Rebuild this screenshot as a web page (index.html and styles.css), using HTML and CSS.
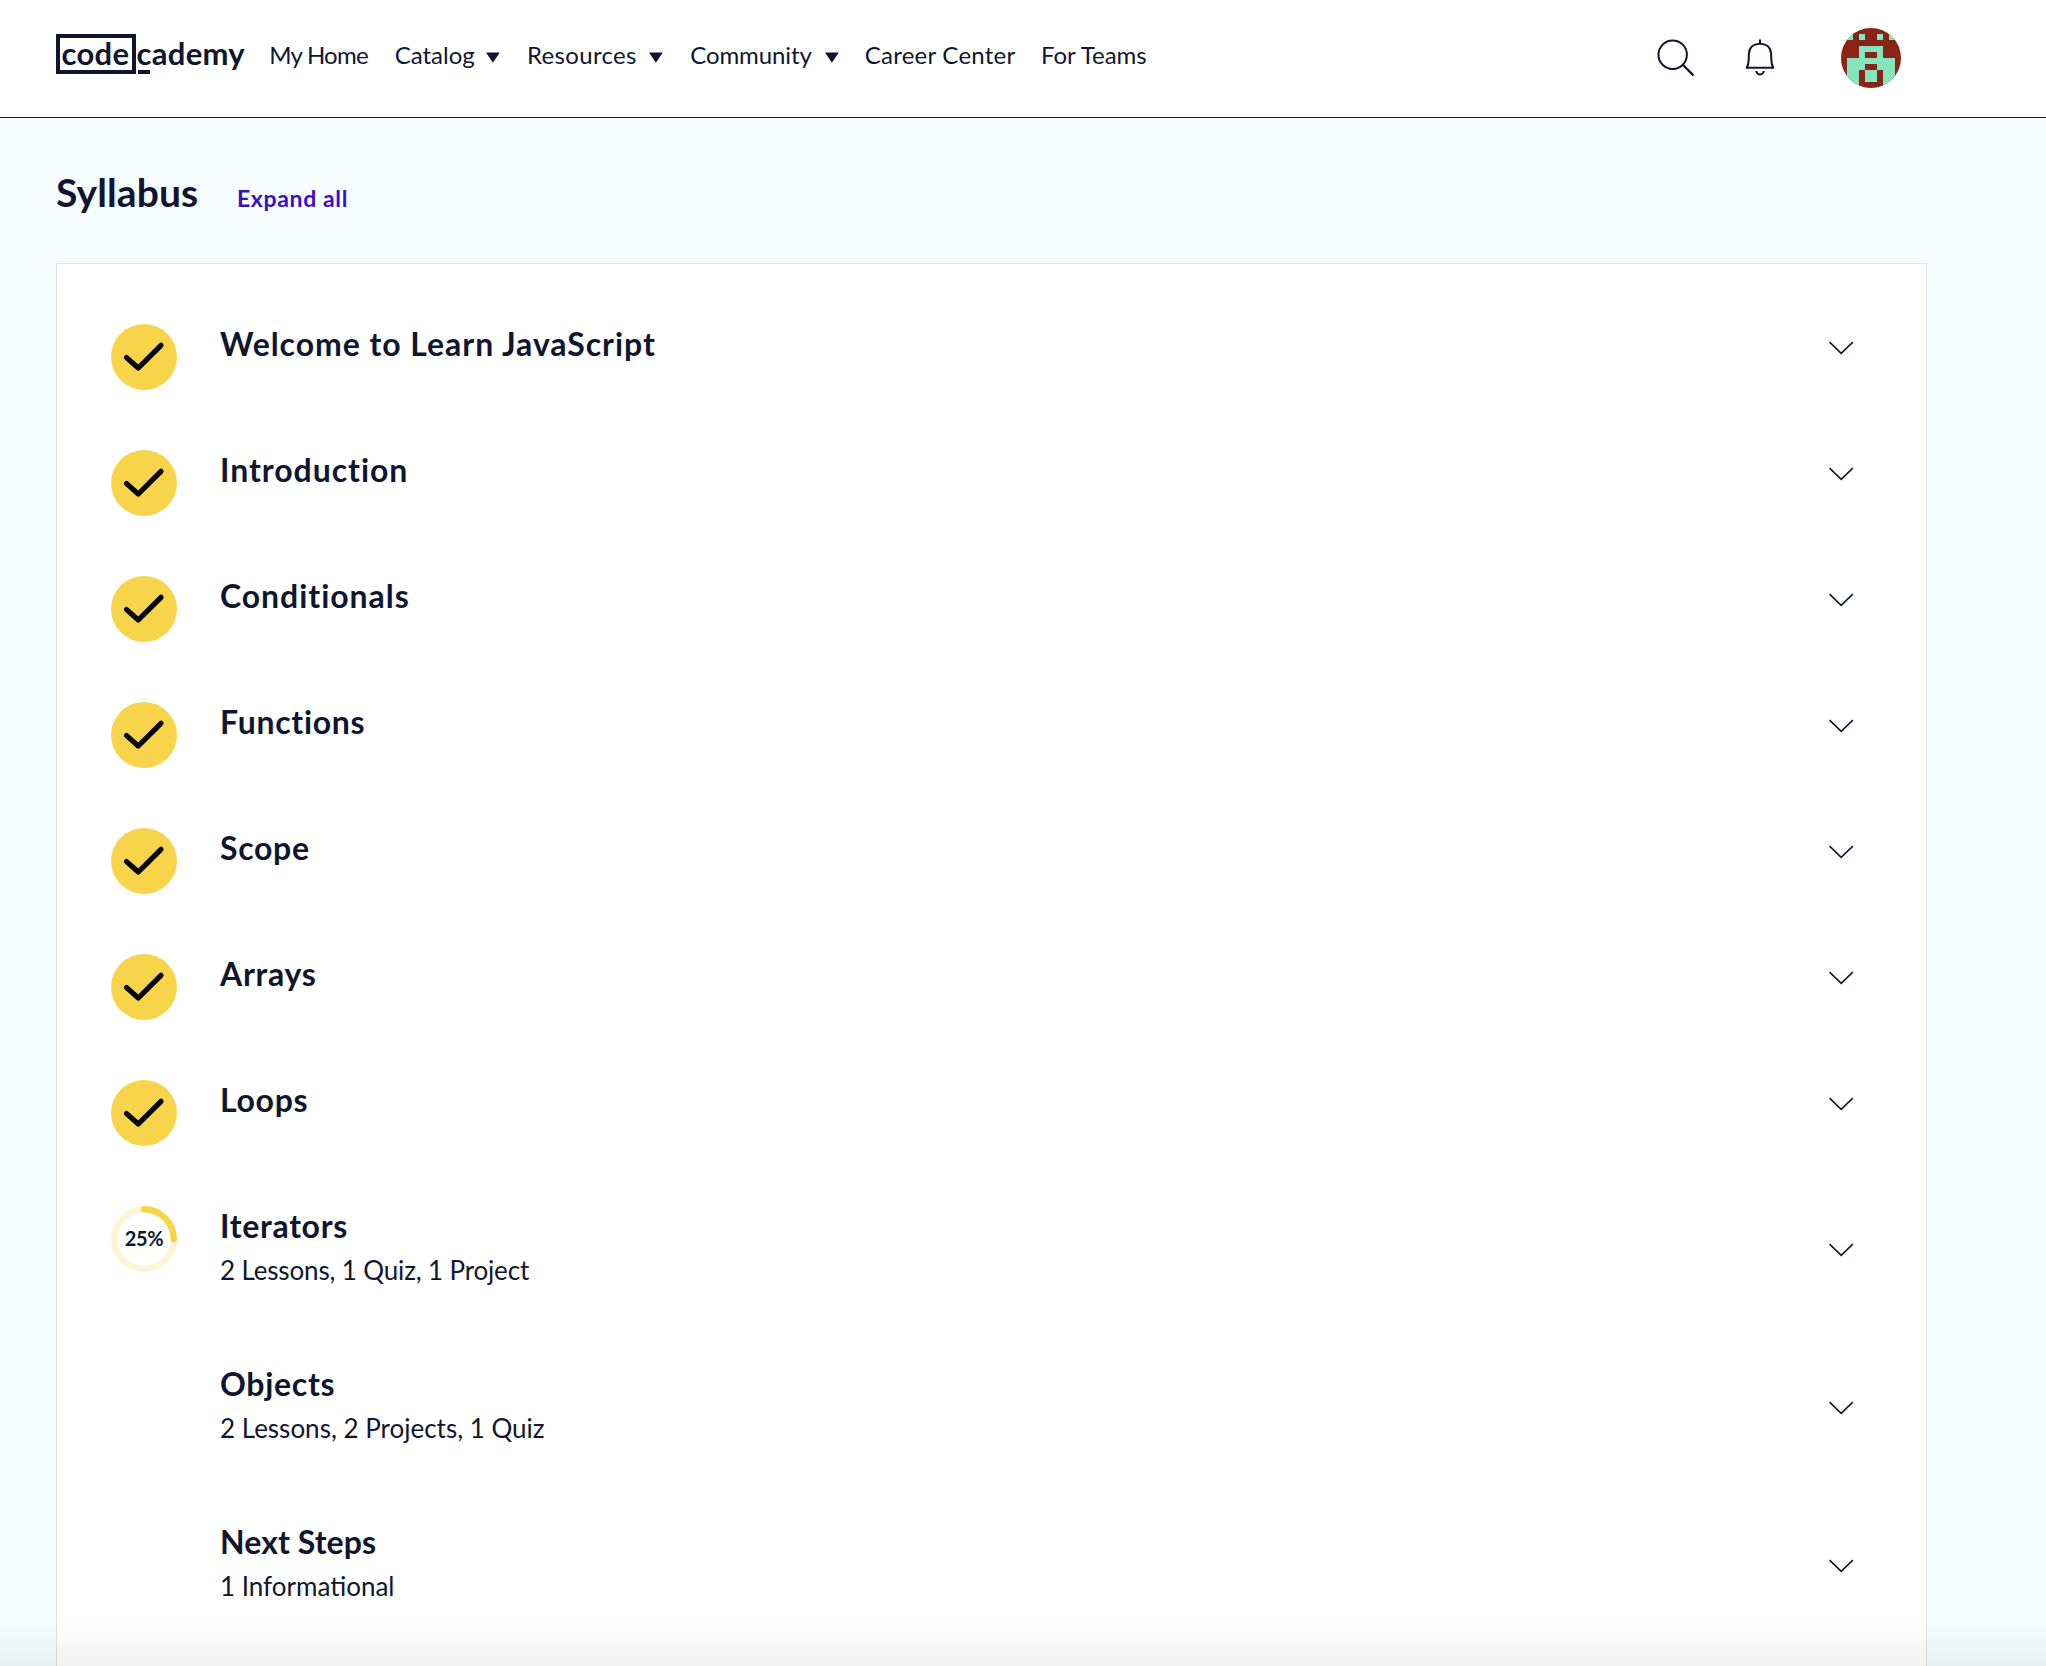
FILE: index.html
```
<!DOCTYPE html>
<html lang="en">
<head>
<meta charset="utf-8">
<title>Syllabus</title>
<link rel="stylesheet" href="styles.css">
</head>
<body>
<svg class="defs" aria-hidden="true">
  <symbol id="check" viewBox="0 0 66 66"><circle cx="33" cy="33" r="33" fill="#f7d449"/><path d="M15.6 33.6 27.3 44 50 21.3" fill="none" stroke="#000" stroke-width="5.2" stroke-linecap="round" stroke-linejoin="round"/></symbol>
  <symbol id="chevron" viewBox="0 0 26 14"><path d="M1.6 1.2 13.2 12.4 24.8 1.2" fill="none" stroke="#10162f" stroke-width="1.6"/></symbol>
  <symbol id="caret" viewBox="0 0 14 11"><path d="M0 .5h13.8L6.9 10.8z" fill="#10162f"/></symbol>
</svg>

<header class="header">
  <a class="logo"><span class="logo-box">code</span><span class="logo-rest">cademy</span></a>
  <nav class="nav">
    <a class="nav-home">My Home</a>
    <a class="menu">Catalog <svg class="caret"><use href="#caret"/></svg></a>
    <a class="menu nav-resources">Resources <svg class="caret"><use href="#caret"/></svg></a>
    <a class="menu nav-community">Community <svg class="caret"><use href="#caret"/></svg></a>
    <a class="nav-career">Career Center</a>
    <a>For Teams</a>
  </nav>
  <div class="tools">
    <svg class="search" viewBox="0 0 38 38" fill="none" stroke="#10162f"><circle cx="15.7" cy="15.7" r="14.2" stroke-width="2"/><path d="M25.5 25.5 36.5 36.5" stroke-width="2.4"/></svg>
    <svg class="bell" viewBox="0 0 30 38" fill="none" stroke="#10162f" stroke-width="2"><path d="M15 .5V5M.8 28.8h28.4M2 28.5C4.5 23 3.5 18 4 14 4.600 8 9 4.700 15 4.700S25.400 8 26 14C26.500 18 25.500 23 28 28.500M11.300 32C11.800 36.600 18.200 36.600 18.700 32"/></svg>
    <svg class="avatar" viewBox="0 0 10 10" shape-rendering="crispEdges"><rect width="10" height="10" fill="#8a2416"/><path fill="#85e5be" d="M1 1h1v1H1zM3 1h1v1H3zM6 1h1v1H6zM8 1h1v1H8zM3 3h4v2h2v5H7V7H6V6H4V7H3v3H1V5h2zM4 7v2h2V7z"/><path fill="#8a2416" d="M4 4h2v1H4z"/></svg>
  </div>
</header>

<main class="main">
  <div class="heading"><h1>Syllabus</h1><a class="expand">Expand all</a></div>
  <ul class="card">
    <li class="item"><svg class="status"><use href="#check"/></svg><div class="text"><h2 class="wide">Welcome to Learn JavaScript</h2></div><svg class="chevron"><use href="#chevron"/></svg></li>
    <li class="item"><svg class="status"><use href="#check"/></svg><div class="text"><h2 class="wide">Introduction</h2></div><svg class="chevron"><use href="#chevron"/></svg></li>
    <li class="item"><svg class="status"><use href="#check"/></svg><div class="text"><h2 class="wide">Conditionals</h2></div><svg class="chevron"><use href="#chevron"/></svg></li>
    <li class="item"><svg class="status"><use href="#check"/></svg><div class="text"><h2>Functions</h2></div><svg class="chevron"><use href="#chevron"/></svg></li>
    <li class="item"><svg class="status"><use href="#check"/></svg><div class="text"><h2>Scope</h2></div><svg class="chevron"><use href="#chevron"/></svg></li>
    <li class="item"><svg class="status"><use href="#check"/></svg><div class="text"><h2>Arrays</h2></div><svg class="chevron"><use href="#chevron"/></svg></li>
    <li class="item"><svg class="status"><use href="#check"/></svg><div class="text"><h2>Loops</h2></div><svg class="chevron"><use href="#chevron"/></svg></li>
    <li class="item detailed">
      <div class="status progress"><svg viewBox="0 0 66 66" fill="none" stroke-width="6.4"><circle cx="33" cy="33" r="29.700" stroke="#fff5d6"/><path d="M33 3.300A29.700 29.700 0 0 1 62.700 33" stroke="#f7d449" stroke-linecap="round"/></svg><span>25%</span></div>
      <div class="text"><h2>Iterators</h2><p class="snug">2 Lessons, 1 Quiz, 1 Project</p></div><svg class="chevron"><use href="#chevron"/></svg></li>
    <li class="item detailed"><div class="status"></div><div class="text"><h2>Objects</h2><p>2 Lessons, 2 Projects, 1 Quiz</p></div><svg class="chevron"><use href="#chevron"/></svg></li>
    <li class="item detailed"><div class="status"></div><div class="text"><h2 class="tight">Next Steps</h2><p>1 Informational</p></div><svg class="chevron"><use href="#chevron"/></svg></li>
  </ul>
</main>
<div class="fade"></div>
</body>
</html>
```

FILE: styles.css
```
* { box-sizing: border-box; }
body {
  margin: 0;
  height: 1666px;
  overflow: hidden;
  display: flex;
  flex-direction: column;
  background: #f7fcff;
  color: #10162f;
  font-family: Lato, "Open Sans", sans-serif;
}
h1, h2, p, ul { margin: 0; padding: 0; }
svg { display: block; }
.defs { display: none; }

.header {
  flex: none;
  display: flex;
  align-items: flex-start;
  height: 118px;
  padding: 0 145px 0 56px;
  background: #fff;
  border-bottom: 1px solid #10162f;
}
.logo {
  display: flex;
  width: 213.300px;
  margin-top: 34px;
  font-size: 31px;
  font-weight: 700;
  line-height: 31px;
  letter-spacing: 0.3px;
}
.logo-box {
  flex: none;
  width: 80px;
  height: 40px;
  padding-left: 1.500px;
  border: 4px solid #10162f;
}
.logo-rest {
  height: 40px;
  margin-top: 4px;
  padding-left: 0.500px;
}
.logo-rest::after {
  content: "";
  display: block;
  width: 12px;
  height: 4px;
  margin: 1px 0 0 1.500px;
  background: #10162f;
}
.nav {
  display: grid;
  grid-template-columns: 125.400px 132.300px 163.300px 174.400px 176.300px auto;
  margin-top: 40px;
  font-size: 24px;
  line-height: 29px;
  white-space: nowrap;
}
.menu {
  display: flex;
  justify-content: space-between;
  align-items: flex-start;
  padding-right: 27px;
}
.nav-home { letter-spacing: -0.770px; }
.nav-resources { letter-spacing: 0.320px; }
.nav-community { letter-spacing: -0.100px; padding-right: 25.500px; }
.nav-career { letter-spacing: 0.250px; }
.caret { flex: none; width: 14px; height: 11px; margin-top: 12px; }

.tools { display: flex; margin-left: auto; }
.search { width: 38px; height: 38px; margin-top: 39px; }
.bell { width: 30px; height: 38px; margin: 39px 0 0 50px; }
.avatar { width: 60px; height: 60px; margin: 28px 0 0 66px; border-radius: 50%; }

.main { flex: none; padding: 51px 119px 0 56px; }
.heading {
  display: flex;
  align-items: baseline;
  height: 94px;
}
h1 { width: 181px; font-size: 39px; line-height: 47px; letter-spacing: 0.100px; }
.expand {
  color: #3a10c5;
  font-size: 23px;
  font-weight: 700;
  letter-spacing: 0.640px;
}
.card {
  height: 1420px;
  padding: 60px 72px 0 54px;
  background: #fff;
  border: 1px solid #dfe3e6;
  list-style: none;
}
.item {
  display: grid;
  grid-template-columns: 66px 1fr 26px;
  column-gap: 43px;
  align-items: start;
  height: 126px;
}
.item.detailed { height: 158px; }
.status { width: 66px; height: 66px; }
.text { height: 48px; }
.detailed .text { height: 88px; }
h2 { font-size: 32px; line-height: 39px; letter-spacing: 0.700px; }
h2.wide { letter-spacing: 0.950px; }
h2.tight { letter-spacing: 0.080px; }
.text p { margin-top: 8px; font-size: 26px; line-height: 34px; }
.text .snug { letter-spacing: -0.150px; }
.chevron { width: 26px; height: 14px; margin-top: 17px; }
.detailed .chevron { margin-top: 37px; }

.progress { display: grid; place-items: center; }
.progress > * { grid-area: 1 / 1; }
.progress svg { width: 66px; height: 66px; }
.progress span { font-size: 20px; font-weight: 700; line-height: 24px; letter-spacing: -0.350px; margin-top: -3px; }

.fade {
  position: fixed;
  inset: auto 0 0 0;
  height: 46px;
  background: linear-gradient(rgba(0, 0, 0, 0), rgba(0, 0, 0, 0.055));
}
```
